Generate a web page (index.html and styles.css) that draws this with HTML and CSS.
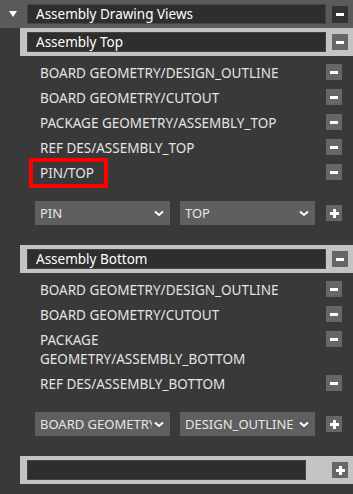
FILE: index.html
```html
<!DOCTYPE html>
<html>
<head>
<meta charset="utf-8">
<link rel="stylesheet" href="styles.css">
</head>
<body>
<div class="panel">
  <div class="topbar">
    <span class="caret"></span>
    <div class="field">Assembly Drawing Views</div>
    <button class="btn btn-dark"><span class="minus"></span></button>
  </div>

  <div class="section">
    <div class="head">
      <div class="field">Assembly Top</div>
      <button class="btn"><span class="minus"></span></button>
    </div>
    <div class="rows">
      <div class="row"><span class="label">BOARD GEOMETRY/DESIGN_OUTLINE</span><button class="btn"><span class="minus"></span></button></div>
      <div class="row"><span class="label">BOARD GEOMETRY/CUTOUT</span><button class="btn"><span class="minus"></span></button></div>
      <div class="row"><span class="label">PACKAGE GEOMETRY/ASSEMBLY_TOP</span><button class="btn"><span class="minus"></span></button></div>
      <div class="row"><span class="label">REF DES/ASSEMBLY_TOP</span><button class="btn"><span class="minus"></span></button></div>
      <div class="row"><span class="label"><span class="mark">PIN/TOP</span></span><button class="btn"><span class="minus"></span></button></div>
    </div>
    <div class="adder">
      <div class="select"><span class="sel-text">PIN</span><svg class="chev" width="10" height="7" viewBox="0 0 10 7"><path d="M1 1.5 L5 5 L9 1.5" fill="none" stroke="#fff" stroke-width="2"/></svg></div>
      <div class="select"><span class="sel-text">TOP</span><svg class="chev" width="10" height="7" viewBox="0 0 10 7"><path d="M1 1.5 L5 5 L9 1.5" fill="none" stroke="#fff" stroke-width="2"/></svg></div>
      <button class="btn"><span class="plus"></span></button>
    </div>
  </div>

  <div class="section">
    <div class="head">
      <div class="field">Assembly Bottom</div>
      <button class="btn"><span class="minus"></span></button>
    </div>
    <div class="rows">
      <div class="row"><span class="label">BOARD GEOMETRY/DESIGN_OUTLINE</span><button class="btn"><span class="minus"></span></button></div>
      <div class="row"><span class="label">BOARD GEOMETRY/CUTOUT</span><button class="btn"><span class="minus"></span></button></div>
      <div class="row"><span class="label">PACKAGE GEOMETRY/ASSEMBLY_BOTTOM</span><button class="btn"><span class="minus"></span></button></div>
      <div class="row"><span class="label">REF DES/ASSEMBLY_BOTTOM</span><button class="btn"><span class="minus"></span></button></div>
    </div>
    <div class="adder">
      <div class="select"><span class="sel-text">BOARD GEOMETRY</span><svg class="chev" width="10" height="7" viewBox="0 0 10 7"><path d="M1 1.5 L5 5 L9 1.5" fill="none" stroke="#fff" stroke-width="2"/></svg></div>
      <div class="select"><span class="sel-text">DESIGN_OUTLINE</span><svg class="chev" width="10" height="7" viewBox="0 0 10 7"><path d="M1 1.5 L5 5 L9 1.5" fill="none" stroke="#fff" stroke-width="2"/></svg></div>
      <button class="btn"><span class="plus"></span></button>
    </div>
  </div>

  <div class="newbar">
    <div class="field field-short"></div>
    <button class="btn"><span class="plus"></span></button>
  </div>
</div>
</body>
</html>
```

FILE: styles.css
```css
html, body {
  margin: 0;
  padding: 0;
  background: #393939;
}

body {
  font-family: "Noto Sans", "Open Sans", sans-serif;
  font-size: 13.5px;
  color: #e4e4e4;
}

.panel {
  width: 353px;
  height: 494px;
  overflow: hidden;
}

.btn {
  width: 16px;
  height: 16px;
  padding: 0;
  border: 0;
  background: #666666;
  display: flex;
  align-items: center;
  justify-content: center;
  flex: none;
}

.btn-dark {
  background: #333333;
  height: 17px;
}

.minus {
  width: 8px;
  height: 3px;
  background: #ffffff;
}

.plus {
  width: 9px;
  height: 9px;
  background:
    linear-gradient(#fff, #fff) center / 9px 3px no-repeat,
    linear-gradient(#fff, #fff) center / 3px 9px no-repeat;
}

.field {
  height: 20px;
  box-sizing: border-box;
  background: #2e2e2e;
  border: 1px solid #444444;
  color: #ffffff;
  padding-left: 8px;
  line-height: 18px;
  white-space: nowrap;
  overflow: hidden;
}

.topbar {
  height: 28px;
  background: #5a5a5a;
  display: flex;
  align-items: center;
  padding-right: 5px;
}

.caret {
  width: 0;
  height: 0;
  border-left: 4px solid transparent;
  border-right: 4px solid transparent;
  border-top: 6px solid #ffffff;
  margin: 0 10px 0 9px;
}

.topbar .field {
  width: 299px;
}

.topbar .btn {
  margin-left: 6px;
}

.section {
  margin-left: 20px;
  padding-bottom: 20px;
}

.head, .newbar {
  height: 28px;
  background: #c4c4c4;
  display: flex;
  align-items: center;
  padding-left: 7px;
  padding-right: 5px;
}

.head .field {
  width: 299px;
}

.head .btn, .newbar .btn {
  margin-left: 6px;
}

.rows {
  padding-top: 5px;
}

.row {
  display: flex;
  align-items: flex-start;
  padding: 3px 11px 3px 20px;
  line-height: 19px;
}

.label {
  flex: 1;
  min-width: 0;
  padding-right: 36px;
}

.mark {
  position: relative;
}

.mark::after {
  content: "";
  position: absolute;
  left: -11px;
  right: -14px;
  top: -6px;
  bottom: -6px;
  border: 4px solid #ff0000;
}

.adder {
  display: flex;
  align-items: center;
  gap: 10px;
  margin-top: 15px;
  padding-left: 15px;
}

.select {
  width: 135px;
  height: 24px;
  box-sizing: border-box;
  background: #5f5f5f;
  display: flex;
  align-items: center;
  padding: 0 6px 0 5px;
  color: #e6e6e6;
  font-size: 13px;
}

.sel-text {
  flex: 1;
  min-width: 0;
  white-space: nowrap;
  overflow: hidden;
}

.chev {
  flex: none;
  margin-left: 2px;
}

.adder .btn {
  margin-left: 1px;
}

.newbar {
  margin-left: 20px;
}

.field-short {
  width: 279px;
}

.newbar .btn {
  margin-left: 26px;
}
```
